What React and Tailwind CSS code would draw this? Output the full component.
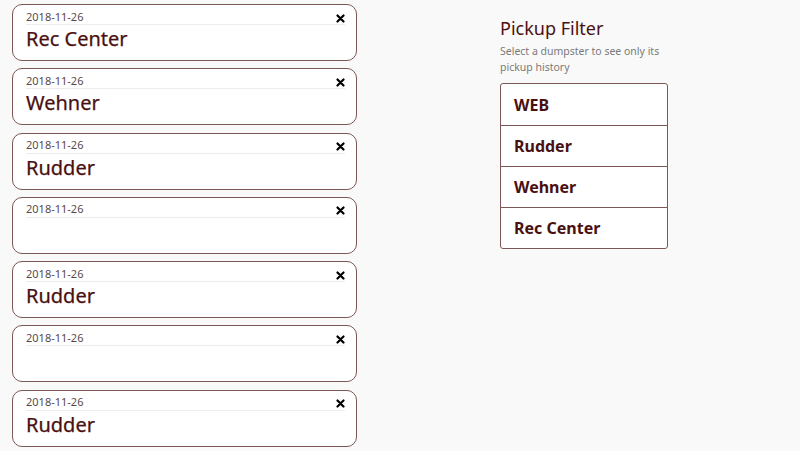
const pickups = [
  { date: "2018-11-26", name: "Rec Center" },
  { date: "2018-11-26", name: "Wehner" },
  { date: "2018-11-26", name: "Rudder" },
  { date: "2018-11-26", name: "" },
  { date: "2018-11-26", name: "Rudder" },
  { date: "2018-11-26", name: "" },
  { date: "2018-11-26", name: "Rudder" },
];

const dumpsters = ["WEB", "Rudder", "Wehner", "Rec Center"];

function CloseIcon() {
  return (
    <svg width="9" height="9" viewBox="0 0 9 9" className="mt-[4px]">
      <path d="M1.5 1.5 L7.5 7.5 M7.5 1.5 L1.5 7.5" stroke="#000" strokeWidth="2.2" strokeLinecap="round" />
    </svg>
  );
}

function PickupCard({ date, name }) {
  return (
    <div className="h-[57px] bg-white border border-[#7d5656] rounded-[10px] pl-[13px] pr-[11px] pt-[3px]">
      <div className="flex items-center justify-between h-[17px] border-b border-[#ececec]">
        <span className="text-[11px] text-[#5a4a4a] leading-none">{date}</span>
        <CloseIcon />
      </div>
      <div className="text-[20px] leading-[28px] text-[#4a1010] [-webkit-text-stroke:0.25px_#4a1010]">{name}</div>
    </div>
  );
}

export default function App() {
  return (
    <div
      className="w-[800px] h-[451px] overflow-hidden bg-[#f9f9f9] flex"
      style={{ fontFamily: '"Noto Sans", "Open Sans", sans-serif' }}
    >
      <div className="w-[345px] ml-[12px] pt-[4px] flex flex-col gap-[7.3px]">
        {pickups.map((p, i) => (
          <PickupCard key={i} {...p} />
        ))}
      </div>

      <div className="ml-[143px] pt-[16px] w-[168px]">
        <h2 className="text-[18px] leading-[24px] text-[#4a1010]">Pickup Filter</h2>
        <p className="mt-[3px] text-[10.5px] leading-[16px] text-[#7a7a7a] w-[160px]">
          Select a dumpster to see only its pickup history
        </p>
        <div className="mt-[8px] bg-white border border-[#7d5656] rounded-[3px]">
          {dumpsters.map((d, i) => (
            <div
              key={d}
              className={`h-[41px] flex items-center pl-[13px] text-[16px] font-bold text-[#4a1010] ${
                i > 0 ? "border-t border-[#7d5656]" : ""
              }`}
            >
              {d}
            </div>
          ))}
        </div>
      </div>
    </div>
  );
}
